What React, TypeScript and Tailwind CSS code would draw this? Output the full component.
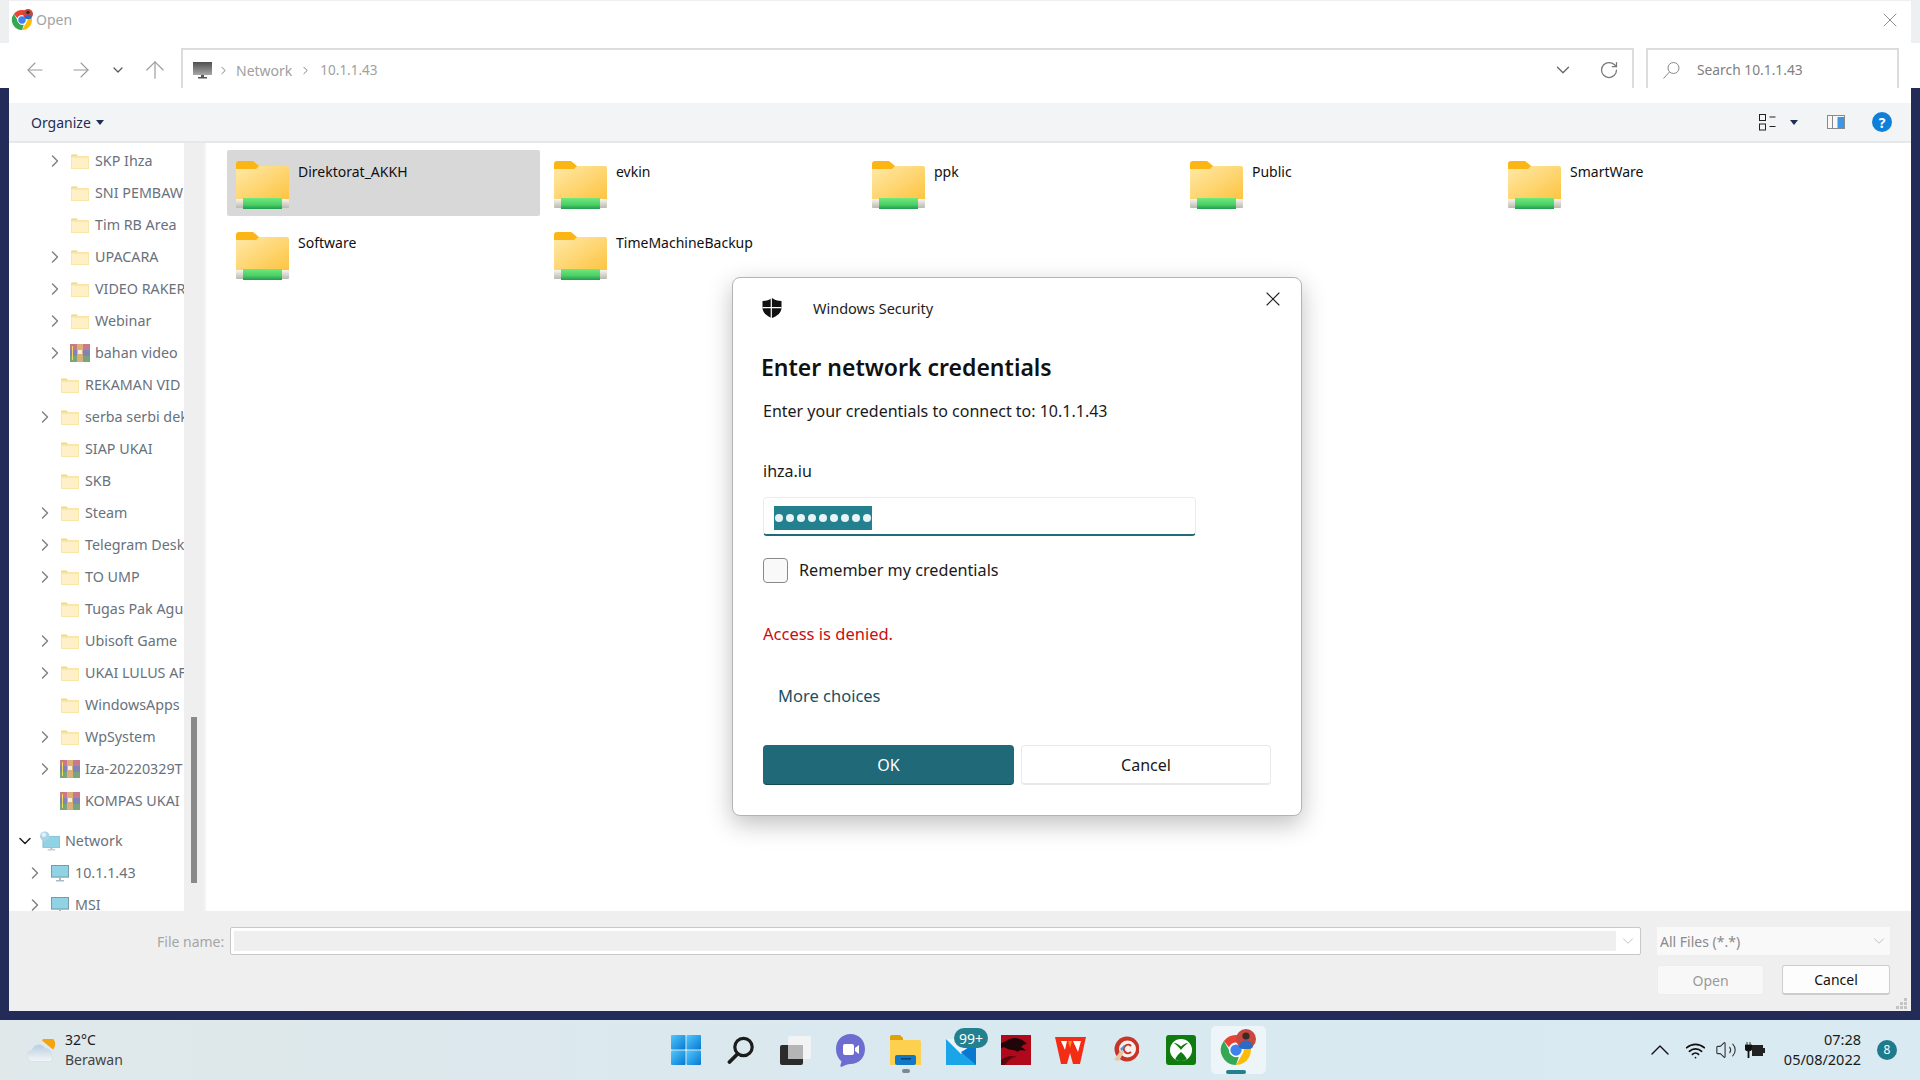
import React from 'react';
import { ArrowLeft, ArrowRight, ArrowUp, ChevronDown, ChevronRight, ChevronUp, RotateCw, Volume2, Wifi, X } from 'lucide-react';

type Kind = 'folder' | 'rar' | 'network' | 'pc';

interface TreeRow {
  name: string;
  level: 0 | 1 | 2 | 3;
  arrow?: boolean;
  kind: Kind;
  open?: boolean;
}

const treeRows: TreeRow[] = [
  { name: 'SKP Ihza', level: 3, arrow: true, kind: 'folder' },
  { name: 'SNI PEMBAW', level: 3, kind: 'folder' },
  { name: 'Tim RB Area', level: 3, kind: 'folder' },
  { name: 'UPACARA', level: 3, arrow: true, kind: 'folder' },
  { name: 'VIDEO RAKER', level: 3, arrow: true, kind: 'folder' },
  { name: 'Webinar', level: 3, arrow: true, kind: 'folder' },
  { name: 'bahan video', level: 3, arrow: true, kind: 'rar' },
  { name: 'REKAMAN VID', level: 2, kind: 'folder' },
  { name: 'serba serbi dek', level: 2, arrow: true, kind: 'folder' },
  { name: 'SIAP UKAI', level: 2, kind: 'folder' },
  { name: 'SKB', level: 2, kind: 'folder' },
  { name: 'Steam', level: 2, arrow: true, kind: 'folder' },
  { name: 'Telegram Desk', level: 2, arrow: true, kind: 'folder' },
  { name: 'TO UMP', level: 2, arrow: true, kind: 'folder' },
  { name: 'Tugas Pak Agu', level: 2, kind: 'folder' },
  { name: 'Ubisoft Game', level: 2, arrow: true, kind: 'folder' },
  { name: 'UKAI LULUS AF', level: 2, arrow: true, kind: 'folder' },
  { name: 'WindowsApps', level: 2, kind: 'folder' },
  { name: 'WpSystem', level: 2, arrow: true, kind: 'folder' },
  { name: 'Iza-20220329T', level: 2, arrow: true, kind: 'rar' },
  { name: 'KOMPAS UKAI', level: 2, kind: 'rar' },
];

const netRows: TreeRow[] = [
  { name: 'Network', level: 0, arrow: true, open: true, kind: 'network' },
  { name: '10.1.1.43', level: 1, arrow: true, kind: 'pc' },
  { name: 'MSI', level: 1, arrow: true, kind: 'pc' },
];

const shares = ['Direktorat_AKKH', 'evkin', 'ppk', 'Public', 'SmartWare', 'Software', 'TimeMachineBackup'];

const indent = { 0: 'pl-[10px]', 1: 'pl-[20px]', 2: 'pl-[30px]', 3: 'pl-[40px]' };

const TreeFolder = () => (
  <svg width="18" height="15" viewBox="0 0 18 15">
    <path d="M0 1.5A1 1 0 0 1 1 .5h4.5l2 2H0z" fill="#f6d576" />
    <rect x="0" y="2" width="18" height="13" fill="#fbe6a6" />
    <rect x="1" y="4" width="16" height="10" fill="#fef1c8" />
  </svg>
);

const RarIcon = () => (
  <svg width="20" height="18" viewBox="0 0 20 18">
    <rect x="0" y="0" width="20" height="6" fill="#c77a8c" />
    <rect x="0" y="6" width="20" height="6" fill="#8284b8" />
    <rect x="0" y="12" width="20" height="6" fill="#78a67c" />
    <rect x="7" y="0" width="6" height="18" fill="#dcae7c" />
    <rect x="8" y="6" width="4" height="4" fill="#f5efe0" />
    <rect x="2" y="2" width="1" height="14" fill="#f2d75c" />
  </svg>
);

const PcIcon = () => (
  <svg width="18" height="17" viewBox="0 0 18 17">
    <rect x="0" y="0" width="18" height="12.5" fill="#8fd3e4" />
    <rect x="0.5" y="0.5" width="17" height="11.5" fill="none" stroke="#7a9aa6" />
    <rect x="8" y="12.5" width="2" height="3" fill="#a9bcc4" />
    <rect x="5" y="15" width="8" height="1.5" fill="#a9bcc4" />
  </svg>
);

const NetworkIcon = () => (
  <svg width="21" height="20" viewBox="0 0 21 20">
    <rect x="3" y="5" width="18" height="12" fill="#8fd3e4" stroke="#7ab0c0" strokeWidth="0.6" />
    <rect x="11" y="17" width="2" height="2" fill="#a9bcc4" />
    <rect x="8" y="18.5" width="8" height="1.5" fill="#c3ced3" />
    <circle cx="5" cy="5" r="5" fill="#a9d4e6" />
    <circle cx="4" cy="3.5" r="2.4" fill="#e3f1f7" />
  </svg>
);

const ShareFolder = () => (
  <svg width="53" height="48" viewBox="0 0 53 48">
    <defs>
      <linearGradient id="shareBody" x1="0" y1="0" x2="1" y2="1">
        <stop offset="0" stopColor="#ffe9a8" />
        <stop offset="1" stopColor="#fdc441" />
      </linearGradient>
      <linearGradient id="shareBar" x1="0" y1="0" x2="0" y2="1">
        <stop offset="0" stopColor="#70e87c" />
        <stop offset="0.6" stopColor="#4ccf66" />
        <stop offset="1" stopColor="#1f9c50" />
      </linearGradient>
      <linearGradient id="shareEnd" x1="0" y1="0" x2="0" y2="1">
        <stop offset="0" stopColor="#f6f6f0" />
        <stop offset="1" stopColor="#b9b9b0" />
      </linearGradient>
    </defs>
    <path d="M0 3a3 3 0 0 1 3-3h14l6 5v4H0z" fill="#fbb616" />
    <path d="M0 8h20l3-3h28a2 2 0 0 1 2 2v31H0z" fill="url(#shareBody)" />
    <rect x="0" y="38" width="53" height="9" rx="1" fill="url(#shareEnd)" />
    <rect x="7" y="37" width="39" height="11" fill="url(#shareBar)" />
  </svg>
);

const TreeItem: React.FC<TreeRow> = ({ name, level, arrow, kind, open }) => (
  <div className={`flex h-[32px] shrink-0 items-center whitespace-nowrap ${indent[level]}`}>
    <span className="flex w-[12px] shrink-0 justify-center">
      {arrow && !open && <ChevronRight className="h-[20px] w-[20px] shrink-0 text-[#808080]" strokeWidth={1.7} />}
      {open && <ChevronDown className="h-[20px] w-[20px] shrink-0 text-[#222222]" strokeWidth={1.8} />}
    </span>
    <span className="ml-[9px] flex w-[20px] shrink-0 justify-center">
      {kind === 'folder' && <TreeFolder />}
      {kind === 'rar' && <RarIcon />}
      {kind === 'pc' && <PcIcon />}
      {kind === 'network' && <NetworkIcon />}
    </span>
    <span className="ml-[5px] text-[14.3px] text-[#69717c]">{name}</span>
  </div>
);

const ChromeIcon: React.FC<{ size: number }> = ({ size }) => (
  <svg width={size} height={size} viewBox="0 0 48 48">
    <path d="M24 4a20 20 0 0 1 17.3 10H24a10 10 0 0 0-9.3 6.3L7.800 12A20 20 0 0 1 24 4z" fill="#e94335" />
    <path d="M41.300 14A20 20 0 0 1 24 44l8.700-15A10 10 0 0 0 32 16.500z" fill="#fbbc05" />
    <path d="M7.800 12l8.600 15a10 10 0 0 0 11.200 6.300L24 44A20 20 0 0 1 7.800 12z" fill="#34a853" />
    <circle cx="24" cy="24" r="8.500" fill="#3f81ee" stroke="#ffffff" strokeWidth="2" />
  </svg>
);

const Avatar: React.FC<{ className: string }> = ({ className }) => (
  <svg className={className} viewBox="0 0 20 20">
    <circle cx="10" cy="10" r="10" fill="#c8473e" />
    <circle cx="10" cy="7" r="3.600" fill="#3b2a26" />
    <path d="M3 18c1-5 4-6.500 7-6.500S16 13 17 18a10 10 0 0 1-14 0z" fill="#2a6bc4" />
  </svg>
);

const WinLogo = () => (
  <svg width="30" height="30" viewBox="0 0 30 30">
    <defs>
      <linearGradient id="winTile" x1="0" y1="0" x2="1" y2="1">
        <stop offset="0" stopColor="#52c8fb" />
        <stop offset="1" stopColor="#0678d4" />
      </linearGradient>
    </defs>
    <rect x="0" y="0" width="14.500" height="14.500" rx="1" fill="url(#winTile)" />
    <rect x="15.500" y="0" width="14.500" height="14.500" rx="1" fill="url(#winTile)" />
    <rect x="0" y="15.500" width="14.500" height="14.500" rx="1" fill="url(#winTile)" />
    <rect x="15.500" y="15.500" width="14.500" height="14.500" rx="1" fill="url(#winTile)" />
  </svg>
);

const SearchGlass = () => (
  <svg width="28" height="28" viewBox="0 0 28 28">
    <circle cx="16.500" cy="11" r="8.700" fill="none" stroke="#1c1c1c" strokeWidth="3.200" />
    <path d="M10.500 18 L2.500 26" stroke="#1c1c1c" strokeWidth="3.800" strokeLinecap="round" />
  </svg>
);

const TaskView = () => (
  <svg width="31" height="29" viewBox="0 0 31 29">
    <rect x="0" y="9" width="23" height="20" rx="2" fill="#2b2b2b" />
    <rect x="8" y="0" width="23" height="23" rx="2" fill="#f4f4f4" fillOpacity="0.9" />
    <rect x="8" y="9" width="15" height="14" fill="#b5b5b5" />
  </svg>
);

const ChatIcon = () => (
  <svg width="29" height="33" viewBox="0 0 29 33">
    <path d="M14.500 0C23 0 29 6.500 29 15s-6 15-14.500 15c-3 0-5 1-8 2.500-1.500.7-2.500 0-2-1.500l1-3.500C2 24.500 0 20 0 15 0 6.500 6 0 14.500 0z" fill="#6d6dd1" />
    <rect x="7" y="10" width="11" height="11" rx="2" fill="#ffffff" />
    <path d="M19 14l4-3v9l-4-3z" fill="#ffffff" />
  </svg>
);

const FilesIcon = () => (
  <svg width="31" height="30" viewBox="0 0 31 30">
    <path d="M0 2a2 2 0 0 1 2-2h8l3 3v4H0z" fill="#e0a106" />
    <path d="M0 5h29a2 2 0 0 1 2 2v23H0z" fill="#fdd04f" />
    <rect x="5" y="20" width="21" height="10" rx="2" fill="#0f78c8" />
    <rect x="11" y="23" width="10" height="1.500" fill="#0b3e6b" />
  </svg>
);

const MailIcon = () => (
  <svg width="30" height="30" viewBox="0 0 30 30">
    <rect x="0" y="4" width="30" height="26" fill="#1aa5e8" />
    <path d="M0 4l15 15L30 4z" fill="#e6f3fb" />
    <path d="M30 30L15 17l15-8z" fill="#0b78cf" />
  </svg>
);

const DragonIcon = () => (
  <svg width="30" height="30" viewBox="0 0 30 30">
    <rect width="30" height="30" fill="#b0091c" />
    <path d="M0 8c5-1 8-5 13-5 5 0 9 2 13 6-3 0-4 1-6 3 2 1 4 2 5 4-3-1-7-1-9 1-2-3-6-1-9-3-2-1-4-3-7-1z" fill="#200608" />
    <path d="M0 25c6-4 10-5 16-3-5 0-9 3-12 8H0z" fill="#5c0810" />
  </svg>
);

const WpsIcon = () => (
  <svg width="31" height="28" viewBox="0 0 31 28">
    <path d="M0 1h31l-6 27h-7l-3-11-3 11H6z" fill="#f32d15" />
    <path d="M6 5h6l-2 9zM18 5h8l-3 11z" fill="#ffffff" />
    <path d="M13 5h4l-2 7z" fill="#ff8a1f" />
  </svg>
);

const CcleanerIcon = () => (
  <svg width="26" height="30" viewBox="0 0 26 30">
    <circle cx="14" cy="14" r="12.500" fill="#c6342a" />
    <circle cx="14.500" cy="14" r="8.500" fill="#f6f1ec" />
    <path d="M18 11a4.200 4.200 0 1 0 0 6" fill="none" stroke="#c6342a" strokeWidth="2" />
    <path d="M1 25l7-10 3 2-5 9z" fill="#e6c9a4" />
    <path d="M7 14l4-4 1 1-3 5z" fill="#5a8fd0" />
  </svg>
);

const XboxIcon = () => (
  <svg width="30" height="30" viewBox="0 0 30 30">
    <rect width="30" height="30" rx="3" fill="#107c10" />
    <circle cx="15" cy="15" r="11" fill="#ffffff" />
    <path d="M15 11.500c3-2.500 5.500-4 7-3.500-5 4-7 7-7 7s-2-3-7-7c1.500-.5 4 1 7 3.500z" fill="#107c10" />
    <path d="M15 17c3 2.500 6 6 5.500 7.500a11 11 0 0 1-11 0C9 23 12 19.500 15 17z" fill="#107c10" />
  </svg>
);

const WeatherIcon = () => (
  <svg width="29" height="23" viewBox="0 0 29 23">
    <defs>
      <linearGradient id="cloudFill" x1="0" y1="0" x2="0" y2="1">
        <stop offset="0" stopColor="#b9cee0" />
        <stop offset="1" stopColor="#f4f7f9" />
      </linearGradient>
    </defs>
    <path d="M15 1.500a7 7 0 0 1 13 4.500c0 2-1 3.500-2 4.500z" fill="#f5a30f" />
    <path d="M6 22.500a5.500 5.500 0 0 1-1-11 7 7 0 0 1 13-2 6 6 0 0 1 6.500 7 3.500 3.500 0 0 1-2.500 6z" fill="url(#cloudFill)" stroke="#c6d6e2" strokeWidth="0.5" />
  </svg>
);

const App: React.FC = () => {
  return (
    <div className="relative flex h-[1080px] w-[1920px] flex-col overflow-hidden bg-[#232b58] font-['Noto_Sans',sans-serif]">
      {/* Title bar */}
      <div className="flex h-[43px] shrink-0 bg-[#edeff1] pt-[1px]">
        <div className="w-[9px] shrink-0" />
        <div className="flex flex-1 items-center bg-white pb-[5px] pr-[9px]">
          <span className="relative ml-[1px]">
            <ChromeIcon size={24} />
            <Avatar className="absolute right-[1px] top-[1px] h-[10px] w-[10px]" />
          </span>
          <span className="ml-[2px] text-[14px] text-[#a3a3a3]">Open</span>
          <X className="ml-auto h-[24px] w-[24px] text-[#8c8c8c]" strokeWidth={1} />
        </div>
        <div className="w-[9px] shrink-0" />
      </div>

      {/* Navigation row */}
      <div className="flex h-[45px] shrink-0 items-start bg-white pt-[5px]">
        <div className="flex h-[44px] w-[181px] shrink-0 items-center text-[#9a9a9a]">
          <ArrowLeft className="ml-[23px] h-[24px] w-[24px]" strokeWidth={1.1} />
          <ArrowRight className="ml-[22px] h-[24px] w-[24px]" strokeWidth={1.1} />
          <ChevronDown className="ml-[17px] h-[16px] w-[16px] text-[#555555]" strokeWidth={1.8} />
          <ArrowUp className="ml-[15px] h-[28px] w-[28px]" strokeWidth={1} />
        </div>
        <div className="flex h-[44px] w-[1453px] shrink-0 items-center border-2 border-[#dcdcdc] text-[14px] text-[#a0a0a0]">
          <svg className="ml-[10px]" width="19" height="17" viewBox="0 0 19 17">
            <defs>
              <linearGradient id="monitorFill" x1="0" y1="0" x2="0" y2="1">
                <stop offset="0" stopColor="#4f4f4f" />
                <stop offset="1" stopColor="#a8a8a8" />
              </linearGradient>
            </defs>
            <rect width="19" height="13" fill="url(#monitorFill)" />
            <rect x="8" y="13" width="3" height="2" fill="#555555" />
            <rect x="5" y="15" width="9" height="1.500" fill="#555555" />
          </svg>
          <ChevronRight className="ml-[5px] h-[13px] w-[13px] text-[#808080]" strokeWidth={1.8} />
          <span className="ml-[6px]">Network</span>
          <ChevronRight className="ml-[7px] h-[13px] w-[13px] text-[#808080]" strokeWidth={1.8} />
          <span className="ml-[8px] text-[13.5px]">10.1.1.43</span>
          <ChevronDown className="ml-auto h-[22px] w-[22px] text-[#666666]" strokeWidth={1.4} />
          <RotateCw className="ml-[25px] mr-[13px] h-[20px] w-[20px] text-[#777777]" strokeWidth={1.5} />
        </div>
        <div className="ml-[12px] flex h-[44px] w-[253px] shrink-0 items-center border-2 border-[#dcdcdc] text-[14px] text-[#808080]">
          <svg className="ml-[15px]" width="17" height="17" viewBox="0 0 17 17" fill="none" stroke="#888888" strokeWidth="1">
            <circle cx="10.500" cy="6" r="5.500" />
            <path d="M6.500 10 L0.500 16.500" />
          </svg>
          <span className="ml-[17px] text-[13.8px]">Search 10.1.1.43</span>
        </div>
      </div>

      {/* Explorer window */}
      <div className="mx-[9px] flex h-[923px] shrink-0 flex-col">
        <div className="h-[15px] shrink-0 bg-white" />
        <div className="flex h-[38px] shrink-0 items-center bg-[#f3f4f6] pr-[19px]">
          <span className="ml-[22px] text-[14px] text-[#1d2f52]">Organize</span>
          <span className="ml-[5px] h-0 w-0 border-x-[4px] border-t-[5px] border-x-transparent border-t-[#1d2f52]" />
          <svg className="ml-auto" width="17" height="17" viewBox="0 0 17 17">
            <rect x="0.500" y="0.500" width="6" height="6" fill="none" stroke="#222222" />
            <rect x="0.500" y="10" width="6" height="6" fill="none" stroke="#222222" />
            <path d="M10.500 3h6M10.500 12.500h6" stroke="#222222" />
          </svg>
          <span className="ml-[14px] h-0 w-0 border-x-[4px] border-t-[5px] border-x-transparent border-t-[#1d2f52]" />
          <svg className="ml-[29px]" width="18" height="14" viewBox="0 0 18 14">
            <rect x="0.500" y="0.500" width="17" height="13" fill="#f8f8f8" stroke="#8a8a8a" />
            <rect x="5" y="1" width="1" height="12" fill="#8a8a8a" />
            <rect x="10.500" y="2" width="6.500" height="11" fill="#3e96e6" />
          </svg>
          <span className="ml-[27px] flex h-[20px] w-[20px] items-center justify-center rounded-full bg-[#0f80d8] text-[14px] font-bold text-white">?</span>
        </div>
        <div className="h-[2px] shrink-0 bg-[#e6e7e9]" />

        <div className="flex min-h-0 flex-1">
          <div className="flex w-[175px] shrink-0 flex-col overflow-hidden bg-white pt-[2px]">
            {treeRows.map((row) => (
              <TreeItem key={row.name} {...row} />
            ))}
            <div className="h-[8px] shrink-0" />
            {netRows.map((row) => (
              <TreeItem key={row.name} {...row} />
            ))}
          </div>
          <div className="w-[20px] shrink-0 bg-[#efefef] pl-[7px] pt-[574px]">
            <div className="h-[166px] w-[6px] bg-[#8a8a8a]" />
          </div>
          <div className="w-[2px] shrink-0 bg-[#f4f4f4]" />
          <div className="flex-1 bg-white pl-[21px] pt-[7px]">
            <div className="grid grid-cols-[repeat(5,313px)] auto-rows-[66px] gap-[5px]">
              {shares.map((name, i) => (
                <div key={name} className={`flex rounded-[2px] pl-[9px] pt-[11px] ${i === 0 ? 'bg-[#d8d8d8]' : ''}`}>
                  <ShareFolder />
                  <span className="ml-[9px] mt-[1px] text-[14px] leading-[20px] text-[#101010]">{name}</span>
                </div>
              ))}
            </div>
          </div>
        </div>

        {/* Bottom bar */}
        <div className="relative h-[100px] shrink-0 bg-[#efefef] pt-[16px]">
          <div className="flex h-[28px] items-center">
            <span className="ml-[148px] w-[67px] whitespace-nowrap text-[14px] text-[#a6a6a6]">File name:</span>
            <div className="ml-[6px] flex h-[28px] w-[1411px] items-center rounded-[2px] border border-[#c8c8c8] bg-white p-[3px]">
              <div className="h-full flex-1 bg-[#efefef]" />
              <ChevronDown className="ml-[3px] h-[18px] w-[18px] text-[#b0b0b0]" strokeWidth={1} />
            </div>
            <div className="ml-[16px] flex h-[28px] w-[233px] items-center bg-[#f9f9f9] pl-[3px] pr-[2px] text-[14px] text-[#8a8a8a]">
              All Files (*.*)
              <ChevronDown className="ml-auto h-[18px] w-[18px] text-[#b0b0b0]" strokeWidth={1} />
            </div>
          </div>
          <div className="mt-[10px] flex justify-end gap-[18px] pr-[21px]">
            <div className="flex h-[30px] w-[107px] items-center justify-center rounded-[3px] border border-[#ededed] bg-[#f8f8f8] text-[14px] text-[#9a9a9a]">Open</div>
            <div className="flex h-[30px] w-[108px] items-center justify-center rounded-[3px] border border-b-2 border-[#cccccc] bg-[#fdfdfd] text-[14px] text-[#111111]">Cancel</div>
          </div>
          <svg className="absolute bottom-[1px] right-[3px]" width="12" height="12" viewBox="0 0 12 12" fill="#c4c4c4">
            <rect x="8" y="0" width="3" height="3" />
            <rect x="4" y="4" width="3" height="3" />
            <rect x="8" y="4" width="3" height="3" />
            <rect x="0" y="8" width="3" height="3" />
            <rect x="4" y="8" width="3" height="3" />
            <rect x="8" y="8" width="3" height="3" />
          </svg>
        </div>
      </div>

      <div className="h-[9px] shrink-0" />

      {/* Taskbar */}
      <div className="flex h-[60px] shrink-0 items-center bg-gradient-to-r from-[#e0e8ea] via-[#d9e9f0] to-[#d9eaf2]">
        <span className="ml-[27px] w-[29px]">
          <WeatherIcon />
        </span>
        <div className="ml-[9px] flex w-[100px] flex-col text-[14px] leading-[20px]">
          <span className="text-[#1a1a1a]">32°C</span>
          <span className="text-[#444444]">Berawan</span>
        </div>
        <div className="ml-[506px] flex h-[48px] items-center">
          <WinLogo />
          <span className="ml-[26px]"><SearchGlass /></span>
          <span className="ml-[25px]"><TaskView /></span>
          <span className="ml-[25px]"><ChatIcon /></span>
          <span className="relative ml-[25px]">
            <FilesIcon />
            <span className="absolute left-[12px] top-[34px] h-[4px] w-[8px] rounded-full bg-[#7c8a90]" />
          </span>
          <span className="relative ml-[25px]">
            <MailIcon />
            <span className="absolute left-[8px] top-[-7px] flex h-[20px] w-[34px] items-center justify-center rounded-full bg-[#23808f] text-[14px] text-white">99+</span>
          </span>
          <span className="ml-[25px]"><DragonIcon /></span>
          <span className="ml-[24px]"><WpsIcon /></span>
          <span className="ml-[27px]"><CcleanerIcon /></span>
          <span className="ml-[27px]"><XboxIcon /></span>
          <span className="relative ml-[15px] flex h-[48px] w-[55px] items-center rounded-[5px] bg-[#edf5f9] pl-[7px]">
            <ChromeIcon size={36} />
            <Avatar className="absolute right-[10px] top-[3px] h-[20px] w-[20px]" />
            <span className="absolute bottom-0 left-[15px] h-[4px] w-[20px] rounded-full bg-[#23808f]" />
          </span>
        </div>
        <ChevronUp className="ml-[378px] h-[32px] w-[32px] text-[#111111]" strokeWidth={1} />
        <Wifi className="ml-[9px] h-[21px] w-[21px] text-[#111111]" strokeWidth={2} />
        <Volume2 className="ml-[9px] h-[22px] w-[22px] text-[#333333]" strokeWidth={1.2} />
        <svg className="ml-[8px]" width="20" height="16" viewBox="0 0 20 16">
          <path d="M2 0v3M5 0v3M0 3h7v3a3 3 0 0 1-3 3v7H3V9a3 3 0 0 1-3-3z" fill="#111111" stroke="#111111" strokeWidth="0.8" />
          <rect x="7" y="3" width="11" height="11" fill="#222222" />
          <rect x="18" y="6" width="2" height="5" fill="#222222" />
        </svg>
        <div className="ml-[16px] flex w-[80px] flex-col items-end pb-[2px] text-[14.500px] leading-[20px] text-[#1a1a1a]">
          <span>07:28</span>
          <span className="whitespace-nowrap">05/08/2022</span>
        </div>
        <span className="ml-[16px] flex h-[20px] w-[20px] items-center justify-center rounded-full bg-[#1f7a8c] text-[12px] text-white">8</span>
      </div>

      {/* Windows Security prompt */}
      <div className="absolute left-[732px] top-[277px] flex h-[539px] w-[570px] flex-col rounded-[8px] border border-[#b4b4b4] bg-white shadow-[0_8px_24px_rgba(0,0,0,0.25)]">
        <div className="flex h-[41px] shrink-0 items-start pl-[29px] pt-[20px]">
          <svg width="20" height="20" viewBox="0 0 20 20">
            <path d="M10 0c2.500 2 5.500 3 9.500 3v6.500c0 5-4 8.500-9.500 10.500C4.500 18 .5 14.500.5 9.500V3C4.500 3 7.500 2 10 0z" fill="#111111" />
            <path d="M9.300 0v20M.5 9.700h19" stroke="#ffffff" strokeWidth="1.200" />
          </svg>
          <span className="ml-[31px] text-[14.500px] leading-[20px] text-[#222222]">Windows Security</span>
          <X className="absolute right-[16px] top-[9px] h-[24px] w-[24px] text-[#222222]" strokeWidth={1.1} />
        </div>
        <h1 className="ml-[28px] mt-[31px] text-[23px] font-semibold leading-[34px] text-[#111111]">Enter network credentials</h1>
        <p className="ml-[30px] mt-[15px] text-[16px] leading-[24px] text-[#1a1a1a]">Enter your credentials to connect to: 10.1.1.43</p>
        <p className="ml-[30px] mt-[36px] text-[16px] leading-[24px] text-[#1a1a1a]">ihza.iu</p>
        <div className="ml-[30px] mt-[14px] flex h-[39px] w-[433px] items-center rounded-[4px] border border-b-2 border-[#ececec] border-b-[#1f6b78] pl-[10px]">
          <div className="mt-[3px] flex h-[24px] w-[98px] items-center justify-between bg-[#23808f] px-[1px]">
            {[0, 1, 2, 3, 4, 5, 6, 7, 8].map((d) => (
              <span key={d} className="h-[8px] w-[8px] rounded-full bg-[#e7f3f5]" />
            ))}
          </div>
        </div>
        <div className="ml-[30px] mt-[22px] flex h-[25px] items-center">
          <span className="h-[25px] w-[25px] rounded-[4px] border border-[#8a8a8a] bg-[#f9f9f9]" />
          <span className="ml-[11px] text-[16.200px] text-[#1a1a1a]">Remember my credentials</span>
        </div>
        <p className="ml-[30px] mt-[39px] text-[16.500px] leading-[24px] text-[#c80f0f]">Access is denied.</p>
        <p className="ml-[45px] mt-[38px] text-[16.500px] leading-[24px] text-[#1b4f5f]">More choices</p>
        <div className="ml-[30px] mt-[37px] flex gap-[7px]">
          <button className="h-[40px] w-[251px] rounded-[4px] border-b border-[#144b55] bg-[#1f6978] text-[16px] text-white">OK</button>
          <button className="h-[40px] w-[250px] rounded-[4px] border border-b-2 border-[#e9e9e9] bg-white text-[16px] text-[#1a1a1a]">Cancel</button>
        </div>
      </div>
    </div>
  );
};

export default App;
